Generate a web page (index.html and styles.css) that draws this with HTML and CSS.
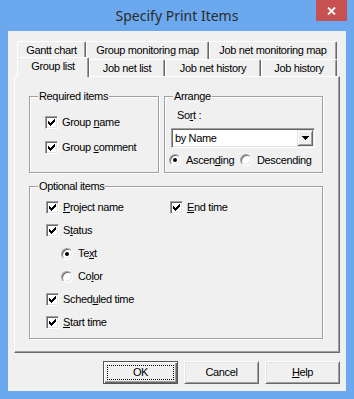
FILE: index.html
```html
<!DOCTYPE html>
<html>
<head>
<meta charset="utf-8">
<link rel="stylesheet" href="styles.css">
</head>
<body>
<div class="window">
  <div class="titlebar">
    <span class="title">Specify Print Items</span>
    <div class="close"><svg width="9" height="8" viewBox="0 0 9 8"><path d="M1 0.5L8 7.5M8 0.5L1 7.5" stroke="#fff" stroke-width="1.8" fill="none"/></svg></div>
  </div>
  <div class="client">
    <div class="tabrow back">
      <div class="tab w-gantt">Gantt chart</div>
      <div class="tab w-gmm">Group monitoring map</div>
      <div class="tab w-jnmm">Job net monitoring map</div>
    </div>
    <div class="tabrow front">
      <div class="tab sel w-gl">Group list</div>
      <div class="tab w-jnl">Job net list</div>
      <div class="tab w-jnh">Job net history</div>
      <div class="tab w-jh">Job history</div>
    </div>
    <div class="panel">
      <div class="toprow">
        <div class="group req">
          <span class="gtitle">Required items</span>
          <label class="chk"><span class="box"><svg viewBox="0 0 11 11"><path d="M2 4h1v3h-1zM3 5h1v3h-1zM4 6h1v3h-1zM5 5h1v3h-1zM6 4h1v3h-1zM7 3h1v3h-1zM8 2h1v3h-1z"/></svg></span><span class="lbl">Group <u>n</u>ame</span></label>
          <label class="chk"><span class="box"><svg viewBox="0 0 11 11"><path d="M2 4h1v3h-1zM3 5h1v3h-1zM4 6h1v3h-1zM5 5h1v3h-1zM6 4h1v3h-1zM7 3h1v3h-1zM8 2h1v3h-1z"/></svg></span><span class="lbl">Group <u>c</u>omment</span></label>
        </div>
        <div class="group arrange">
          <span class="gtitle">Arrange</span>
          <div class="sort">So<u>r</u>t :</div>
          <div class="combo"><span class="ctext">by Name</span><span class="dropbtn"><svg width="7" height="4" viewBox="0 0 7 4"><path d="M0 0h7l-3.5 4z"/></svg></span></div>
          <div class="radios">
            <label class="rad first"><span class="radio on"></span><span class="lbl">Ascen<u>d</u>ing</span></label>
            <label class="rad"><span class="radio"></span><span class="lbl">Descendin<u>g</u></span></label>
          </div>
        </div>
      </div>
      <div class="group optional">
        <span class="gtitle">Optional items</span>
        <div class="row">
          <label class="chk col1"><span class="box"><svg viewBox="0 0 11 11"><path d="M2 4h1v3h-1zM3 5h1v3h-1zM4 6h1v3h-1zM5 5h1v3h-1zM6 4h1v3h-1zM7 3h1v3h-1zM8 2h1v3h-1z"/></svg></span><span class="lbl"><u>P</u>roject name</span></label>
          <label class="chk"><span class="box"><svg viewBox="0 0 11 11"><path d="M2 4h1v3h-1zM3 5h1v3h-1zM4 6h1v3h-1zM5 5h1v3h-1zM6 4h1v3h-1zM7 3h1v3h-1zM8 2h1v3h-1z"/></svg></span><span class="lbl"><u>E</u>nd time</span></label>
        </div>
        <div class="row">
          <label class="chk"><span class="box"><svg viewBox="0 0 11 11"><path d="M2 4h1v3h-1zM3 5h1v3h-1zM4 6h1v3h-1zM5 5h1v3h-1zM6 4h1v3h-1zM7 3h1v3h-1zM8 2h1v3h-1z"/></svg></span><span class="lbl">S<u>t</u>atus</span></label>
        </div>
        <div class="row sub">
          <label class="rad"><span class="radio on"></span><span class="lbl">Te<u>x</u>t</span></label>
        </div>
        <div class="row sub">
          <label class="rad"><span class="radio"></span><span class="lbl">Co<u>l</u>or</span></label>
        </div>
        <div class="row">
          <label class="chk"><span class="box"><svg viewBox="0 0 11 11"><path d="M2 4h1v3h-1zM3 5h1v3h-1zM4 6h1v3h-1zM5 5h1v3h-1zM6 4h1v3h-1zM7 3h1v3h-1zM8 2h1v3h-1z"/></svg></span><span class="lbl">Sched<u>u</u>led time</span></label>
        </div>
        <div class="row">
          <label class="chk"><span class="box"><svg viewBox="0 0 11 11"><path d="M2 4h1v3h-1zM3 5h1v3h-1zM4 6h1v3h-1zM5 5h1v3h-1zM6 4h1v3h-1zM7 3h1v3h-1zM8 2h1v3h-1z"/></svg></span><span class="lbl"><u>S</u>tart time</span></label>
        </div>
      </div>
    </div>
    <div class="buttons">
      <div class="btn default">OK</div>
      <div class="btn">Cancel</div>
      <div class="btn"><u>H</u>elp</div>
    </div>
  </div>
</div>
</body>
</html>
```
FILE: styles.css
```css
* { box-sizing: border-box; }
body { margin: 0; background: #6ba8ee; font-family: "Liberation Sans", Arial, sans-serif; }
.window { width: 354px; height: 399px; background: #6ba8ee; }
.titlebar {
  position: relative; height: 31px; padding-top: 6px; text-align: center;
  font-family: "Noto Sans", sans-serif; font-size: 14px; line-height: 19px; color: #2b2b2b;
}
.close {
  position: absolute; top: 0; right: 7px; width: 31px; height: 21px; background: #c75050;
  display: flex; align-items: center; justify-content: center;
}
.close svg { display: block; }
.client {
  margin: 0 8px; height: 360px; background: #f0f0f0; padding: 10px 6px 0;
  font-size: 11px; letter-spacing: -0.35px; color: #000;
}
u { text-decoration: underline; text-underline-offset: 1px; }
.tabrow { display: flex; margin: 0 3px; }
.tabrow.back { height: 18px; }
.tabrow.front { height: 17px; align-items: flex-end; }
.tab {
  flex: none; height: 100%; background: #f0f0f0;
  border-top: 1px solid #fff; border-left: 1px solid #fff; border-right: 1px solid #696969;
  box-shadow: inset -1px 0 #a0a0a0; border-radius: 2px 2px 0 0;
  text-align: center; white-space: nowrap;
}
.back .tab { line-height: 17px; }
.front .tab { line-height: 16px; }
.tab.sel { position: relative; z-index: 2; height: 20px; margin-bottom: -1px; }
.w-gantt { width: 69px; }
.w-gmm { width: 123px; }
.w-jnmm { width: 128px; }
.w-gl { width: 72px; }
.w-jnl { width: 76px; }
.w-jnh { width: 96px; }
.w-jh { width: 76px; }
.panel {
  height: 277px; border-top: 1px solid #fff; border-left: 1px solid #fff;
  border-right: 1px solid #696969; border-bottom: 1px solid #696969;
  box-shadow: inset -1px -1px #a0a0a0; padding: 19px 0 0 14px;
}
.toprow { display: flex; gap: 5px; height: 77px; }
.group {
  position: relative; border: 1px solid #a0a0a0;
  box-shadow: inset 1px 1px #fff, 1px 1px #fff;
}
.gtitle {
  position: absolute; top: -7px; left: 8px; padding: 0 1px; background: #f0f0f0;
  line-height: 13px; white-space: nowrap;
}
.lbl { line-height: 13px; white-space: nowrap; }
.req { width: 130px; padding: 19px 0 0 15px; display: flex; flex-direction: column; gap: 12px; }
.chk { display: flex; align-items: center; gap: 4px; }
.box {
  flex: none; width: 13px; height: 13px; background: #fff;
  border: 1px solid; border-color: #a0a0a0 #fff #fff #a0a0a0;
  box-shadow: inset 1px 1px #696969, inset -1px -1px #e3e3e3;
}
.box svg { display: block; width: 11px; height: 11px; shape-rendering: crispEdges; }
.rad { display: flex; align-items: center; gap: 5px; }
.radio {
  flex: none; width: 12px; height: 12px; border-radius: 50%; background: #fff;
  border: 1px solid; border-color: #a0a0a0 #fff #fff #a0a0a0;
  box-shadow: inset 1px 1px #696969, inset -1px -1px #e3e3e3;
  display: flex; align-items: center; justify-content: center;
}
.radio.on::after { content: ""; width: 4px; height: 4px; border-radius: 50%; background: #000; }
.arrange { width: 159px; padding: 12px 0 0 4px; }
.sort { margin-left: 8px; line-height: 13px; }
.combo {
  margin: 6px 0 0 2px; width: 144px; height: 20px; background: #fff;
  border: 1px solid; border-color: #a0a0a0 #fff #fff #a0a0a0;
  box-shadow: inset 1px 1px #696969, inset -1px -1px #e3e3e3;
  display: flex; align-items: center; padding: 1px 1px 1px 3px;
}
.ctext { line-height: 13px; }
.dropbtn {
  margin-left: auto; width: 16px; height: 16px; background: #f0f0f0;
  border: 1px solid; border-color: #e3e3e3 #696969 #696969 #e3e3e3;
  box-shadow: inset 1px 1px #fff, inset -1px -1px #a0a0a0;
  display: flex; align-items: center; justify-content: center;
}
.dropbtn svg { display: block; shape-rendering: crispEdges; }
.radios { display: flex; align-items: center; height: 12px; margin-top: 6px; }
.rad.first { width: 71px; }
.optional { margin-top: 13px; width: 294px; height: 153px; padding: 9px 0 0 16px; }
.row { display: flex; align-items: center; height: 23px; }
.row.sub { padding-left: 15px; }
.col1 { width: 124px; }
.buttons { display: flex; justify-content: flex-end; gap: 6px; margin-top: 8px; }
.btn {
  position: relative; width: 75px; height: 23px; background: #f0f0f0;
  border: 1px solid; border-color: #fff #696969 #696969 #fff;
  box-shadow: inset 1px 1px #e3e3e3, inset -1px -1px #a0a0a0;
  text-align: center; line-height: 21px;
}
.btn.default {
  border: 1px solid #555;
  box-shadow: inset 1px 1px #fff, inset -1px -1px #696969, inset -2px -2px #a0a0a0;
}
.btn.default::after {
  content: ""; position: absolute; inset: 3px; border: 1px dotted #000;
}
```
